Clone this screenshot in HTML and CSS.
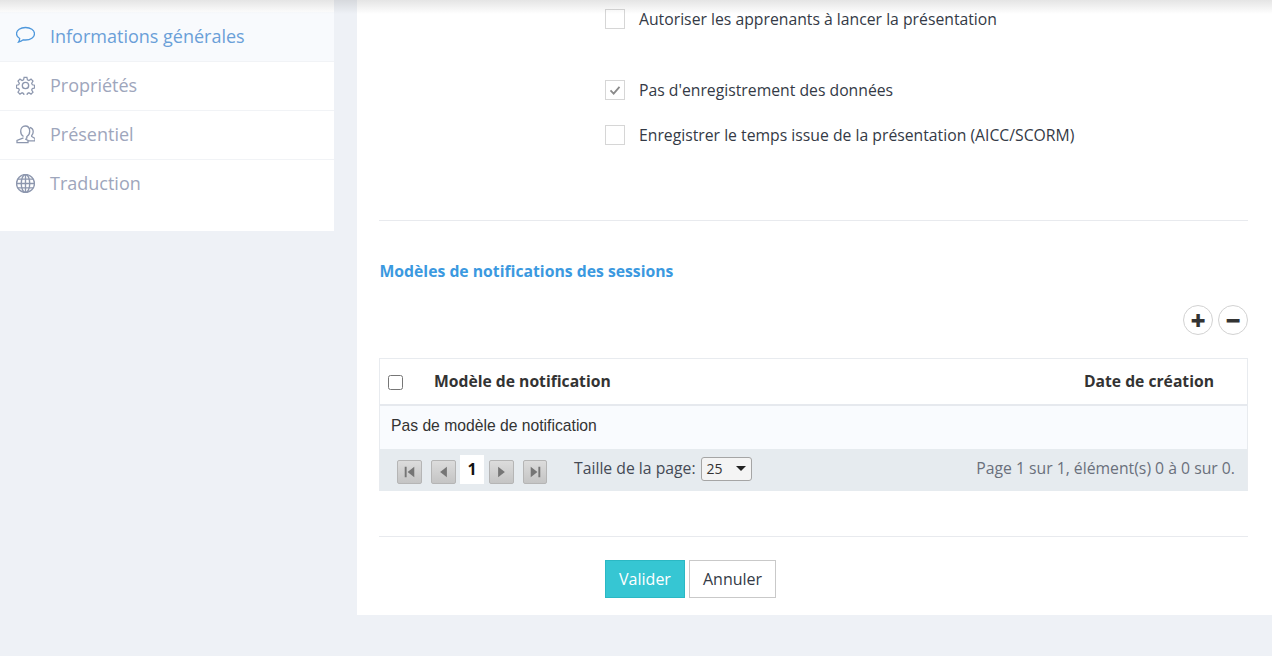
FILE: index.html
```html
<!DOCTYPE html>
<html>
<head>
  <meta charset="UTF-8">
  <title>Informations générales</title>
  <link rel="stylesheet" href="styles.css">
</head>
<body>
<div class="top-shadow"></div>
<div class="page">
  <nav class="sidebar">
    <a class="side-item active" href="#">
      <svg class="side-icon" viewBox="0.5 1 19 19"><path d="M10 2.500c-5 0-9 2.600-9 6.200 0 2 1.300 3.700 3.200 4.800-.1 1.400-.5 2.500-1.200 3.500 1.900-.3 3.600-1.200 4.800-2.200.7.100 1.400.2 2.200.2 5 0 9-2.700 9-6.300s-4-6.200-9-6.200z"/></svg>
      Informations générales
    </a>
    <a class="side-item" href="#">
      <svg class="side-icon" viewBox="1 1 18 18"><circle cx="10" cy="10" r="3"/><path d="M8.500 1.500h3l.5 2.500 1.600.7 2.200-1.400 2.100 2.100-1.400 2.200.7 1.600 2.300.5v3l-2.300.5-.7 1.600 1.400 2.200-2.100 2.100-2.200-1.400-1.600.7-.5 2.300h-3l-.5-2.300-1.600-.7-2.200 1.400-2.100-2.100 1.400-2.200-.7-1.600-2.300-.5v-3l2.300-.5.7-1.600-1.400-2.200 2.100-2.100 2.200 1.400 1.600-.7z" transform="translate(1 1) scale(.9)"/></svg>
      Propriétés
    </a>
    <a class="side-item" href="#">
      <svg class="side-icon" viewBox="0.5 1 19 19"><path d="M8 12.500c-1.800-1-2.800-3-2.800-5.300C5.200 4 7.200 2 9.700 2s4.500 2 4.500 5.200c0 2.300-1 4.300-2.800 5.300v1.300l-1 .7m4-11c2 .5 3.300 2 3.300 4.300 0 1.500-.5 2.800-1.500 3.700v1l3.300 2v2.400H12M8 13.800l-6.500 2.700v2.200h11v-2.200L9.700 15"/></svg>
      Présentiel
    </a>
    <a class="side-item" href="#">
      <svg class="side-icon" viewBox="1 1 18 18"><circle cx="10" cy="10" r="8.500"/><ellipse cx="10" cy="10" rx="4" ry="8.500"/><path d="M10 1.500v17M1.500 10h17M2.700 5.800h14.600M2.700 14.200h14.600"/></svg>
      Traduction
    </a>
  </nav>

  <main class="content">
    <div class="options options-first">
      <label class="check-row"><span class="check"></span>Autoriser les apprenants à lancer la présentation</label>
    </div>
    <div class="options options-second">
      <label class="check-row"><span class="check"><svg viewBox="0 0 20 20"><path d="M5 10.500l3.500 3.500L15 6.500"/></svg></span>Pas d'enregistrement des données</label>
      <label class="check-row"><span class="check"></span>Enregistrer le temps issue de la présentation (AICC/SCORM)</label>
    </div>

    <hr class="sep sep-top">

    <h3 class="section-title">Modèles de notifications des sessions</h3>

    <div class="round-btns">
      <button class="round-btn">+</button>
      <button class="round-btn">−</button>
    </div>

    <div class="grid">
      <div class="grid-head">
        <input type="checkbox" class="grid-check">
        <span class="col-name">Modèle de notification</span>
        <span class="col-date">Date de création</span>
      </div>
      <div class="grid-empty">Pas de modèle de notification</div>
      <div class="pager">
        <button class="pg-btn"><svg viewBox="0 0 24 23"><path d="M7 6h2v11H7zM17 6v11l-7-5.500z"/></svg></button>
        <button class="pg-btn pg-prev"><svg viewBox="0 0 24 23"><path d="M15.500 6v11l-7-5.500z"/></svg></button>
        <span class="pg-current">1</span>
        <button class="pg-btn"><svg viewBox="0 0 24 23"><path d="M8.500 6v11l7-5.500z"/></svg></button>
        <button class="pg-btn pg-last"><svg viewBox="0 0 24 23"><path d="M7 6v11l7-5.500zM15 6h2v11h-2z"/></svg></button>
        <span class="pg-size-label">Taille de la page:</span>
        <span class="pg-select">25<i class="caret"></i></span>
        <span class="pg-info">Page 1 sur 1, élément(s) 0 à 0 sur 0.</span>
      </div>
    </div>

    <hr class="sep sep-bottom">

    <div class="actions">
      <button class="btn btn-primary">Valider</button>
      <button class="btn">Annuler</button>
    </div>
  </main>
</div>
</body>
</html>
```

FILE: styles.css
```css
* {
  box-sizing: border-box;
}

html, body {
  margin: 0;
  height: 100%;
  overflow: hidden;
}

body {
  background: #eef1f6;
  font-family: "Open Sans", sans-serif;
  color: #343a46;
}

.top-shadow {
  position: absolute;
  top: 0;
  left: 0;
  right: 0;
  height: 14px;
  background: linear-gradient(to bottom, rgba(90, 90, 90, 0.16), rgba(90, 90, 90, 0));
  z-index: 5;
}

.page {
  display: flex;
  align-items: flex-start;
  gap: 23px;
}

/* left menu */
.sidebar {
  width: 334px;
  height: 231px;
  background: #fff;
  flex-shrink: 0;
  padding-top: 12px;
}

.side-item {
  display: flex;
  align-items: center;
  height: 49px;
  padding-left: 16px;
  padding-bottom: 2px;
  font-size: 18px;
  color: #9ea6bc;
  text-decoration: none;
  border-bottom: 1px solid #f1f3f6;
}

.side-item:last-child {
  border-bottom: none;
  padding-bottom: 3px;
}

.side-item.active {
  height: 50px;
  background: #f8fafd;
  color: #6a9fd8;
}

.side-icon {
  width: 19px;
  height: 19px;
  margin-right: 15px;
  fill: none;
  stroke: #8d97ae;
  stroke-width: 1.300;
}

.active .side-icon {
  stroke: #4f98dc;
}

/* main panel */
.content {
  flex: 1;
  height: 615px;
  background: #fff;
  padding: 0 24px 0 22px;
}

.options {
  padding-left: 226px;
}

.options-first {
  padding-top: 8px;
}

.options-second {
  padding-top: 26px;
}

.check-row {
  display: flex;
  align-items: center;
  height: 22px;
  font-size: 15.750px;
  margin-bottom: 23px;
}

.check {
  width: 20px;
  height: 20px;
  border: 1px solid #d6d6d6;
  margin-right: 14px;
  flex-shrink: 0;
  background: #fff;
}

.check svg {
  display: block;
  width: 18px;
  height: 18px;
  fill: none;
  stroke: #8a8a8a;
  stroke-width: 2;
}

.sep {
  border: none;
  border-top: 1px solid #e8eaee;
  margin: 0;
}

.sep-top {
  margin-top: 74px;
}

.sep-bottom {
  margin-top: 45px;
}

.section-title {
  margin: 40px 0 0 0.500px;
  font-size: 15.750px;
  line-height: 21px;
  font-weight: 700;
  color: #3b99e0;
}

.round-btns {
  display: flex;
  justify-content: flex-end;
  gap: 5px;
  margin-top: 23px;
}

.round-btn {
  width: 30px;
  height: 30px;
  border-radius: 50%;
  border: 1px solid #d2d2d2;
  background: #fff;
  padding: 0;
  font-family: "Open Sans", sans-serif;
  font-size: 26px;
  line-height: 24px;
  font-weight: 800;
  color: #333;
}

/* table */
.grid {
  margin-top: 23px;
  border: 1px solid #e8ebef;
  border-bottom: none;
}

.grid-head {
  display: flex;
  align-items: center;
  height: 47px;
  padding-bottom: 1px;
  border-bottom: 2px solid #e6e9ee;
  font-size: 15.700px;
  font-weight: 700;
  color: #333;
}

.grid-check {
  width: 15px;
  height: 15px;
  margin: 2px 0 0 8px;
}

.col-name {
  margin-left: 31px;
}

.col-date {
  margin-left: auto;
  margin-right: 33px;
}

.grid-empty {
  height: 43px;
  padding-left: 11px;
  background: #f9fbfe;
  font-family: "Liberation Sans", sans-serif;
  font-size: 15.700px;
  line-height: 40px;
  color: #333;
}

.pager {
  display: flex;
  align-items: center;
  height: 42px;
  padding-left: 17px;
  padding-right: 12px;
  background: #e6ebef;
  font-size: 15.750px;
  color: #555b66;
}

.pg-btn {
  width: 25px;
  height: 24px;
  padding: 0;
  border: 1px solid #b5b5b5;
  border-radius: 2px;
  background: linear-gradient(to bottom, #dcdcdc, #c4c4c4);
  margin-top: 3px;
}

.pg-btn svg {
  display: block;
  width: 23px;
  height: 22px;
  fill: #757575;
}

.pg-prev {
  margin-left: 9px;
}

.pg-last {
  width: 24px;
  margin-left: 9px;
}

.pg-current {
  width: 24px;
  height: 29px;
  margin: 0 5px 1px 4px;
  background: #fff;
  text-align: center;
  line-height: 29px;
  font-size: 16px;
  font-weight: 700;
  color: #111;
}

.pg-size-label {
  margin-left: 27px;
  margin-bottom: 5px;
  color: #444a55;
}

.pg-select {
  display: flex;
  align-items: center;
  justify-content: space-between;
  width: 51px;
  height: 24px;
  margin-left: 5px;
  margin-bottom: 3px;
  padding: 0 5px;
  border: 1px solid #a5a5a5;
  border-radius: 3px;
  background: #f4f4f4;
  font-size: 14px;
  color: #333;
}

.caret {
  width: 0;
  height: 0;
  border-left: 5px solid transparent;
  border-right: 5px solid transparent;
  border-top: 5px solid #222;
}

.pg-info {
  margin-left: auto;
  margin-bottom: 5px;
  color: #6a707c;
}

/* bottom buttons */
.actions {
  display: flex;
  gap: 4px;
  margin-top: 23px;
  padding-left: 226px;
}

.btn {
  height: 38px;
  padding: 0 13px;
  border: 1px solid #c9c9c9;
  background: #fff;
  font-family: "Open Sans", sans-serif;
  font-size: 16px;
  color: #343a46;
}

.btn-primary {
  width: 80px;
  padding: 0;
  background: #36c6d3;
  border-color: #2bb8c4;
  color: #fff;
}
```
